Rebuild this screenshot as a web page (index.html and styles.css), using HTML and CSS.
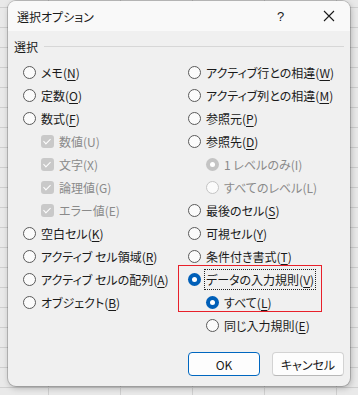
FILE: index.html
```html
<!DOCTYPE html>
<html lang="ja">
<head>
    <meta charset="UTF-8">
    <meta name="viewport" content="width=device-width, initial-scale=1.0">
    <title>選択オプション</title>
    <link rel="stylesheet" href="styles.css">
</head>
<body>
    <div class="dialog">
        <div class="titlebar">
            <span class="title">選択オプション</span>
            <span class="help">?</span>
            <span class="close">
                <svg width="12" height="12" viewBox="0 0 12 12"><path d="M1 1L11 11M11 1L1 11" stroke="#1a1a1a" stroke-width="1.1"/></svg>
            </span>
        </div>

        <div class="content">
            <div class="group-head">
                <span>選択</span>
                <div class="group-line"></div>
            </div>

            <div class="columns">
                <div class="col">
                    <div class="row"><span class="radio"></span><span>メモ(<u>N</u>)</span></div>
                    <div class="row"><span class="radio"></span><span>定数(<u>O</u>)</span></div>
                    <div class="row"><span class="radio"></span><span>数式(<u>F</u>)</span></div>
                    <div class="row sub disabled"><span class="check"></span><span>数値(U)</span></div>
                    <div class="row sub disabled"><span class="check"></span><span>文字(X)</span></div>
                    <div class="row sub disabled"><span class="check"></span><span>論理値(G)</span></div>
                    <div class="row sub disabled"><span class="check"></span><span>エラー値(E)</span></div>
                    <div class="row"><span class="radio"></span><span>空白セル(<u>K</u>)</span></div>
                    <div class="row"><span class="radio"></span><span>アクティブ セル領域(<u>R</u>)</span></div>
                    <div class="row"><span class="radio"></span><span>アクティブ セルの配列(<u>A</u>)</span></div>
                    <div class="row"><span class="radio"></span><span>オブジェクト(<u>B</u>)</span></div>
                </div>
                <div class="col">
                    <div class="row"><span class="radio"></span><span>アクティブ行との相違(<u>W</u>)</span></div>
                    <div class="row"><span class="radio"></span><span>アクティブ列との相違(<u>M</u>)</span></div>
                    <div class="row"><span class="radio"></span><span>参照元(<u>P</u>)</span></div>
                    <div class="row"><span class="radio"></span><span>参照先(<u>D</u>)</span></div>
                    <div class="row sub disabled"><span class="radio on"></span><span>1 レベルのみ(I)</span></div>
                    <div class="row sub disabled"><span class="radio"></span><span>すべてのレベル(L)</span></div>
                    <div class="row"><span class="radio"></span><span>最後のセル(<u>S</u>)</span></div>
                    <div class="row"><span class="radio"></span><span>可視セル(<u>Y</u>)</span></div>
                    <div class="row"><span class="radio"></span><span>条件付き書式(<u>T</u>)</span></div>
                    <div class="highlight">
                        <div class="row"><span class="radio on"></span><span class="focus">データの入力規則(<u>V</u>)</span></div>
                        <div class="row sub"><span class="radio on"></span><span>すべて(<u>L</u>)</span></div>
                    </div>
                    <div class="row sub"><span class="radio"></span><span>同じ入力規則(<u>E</u>)</span></div>
                </div>
            </div>

            <div class="buttons">
                <button class="btn default">OK</button>
                <button class="btn">キャンセル</button>
            </div>
        </div>
    </div>
</body>
</html>
```

FILE: styles.css
```css
body {
    margin: 0;
    padding: 1px 0 0 8px;
    height: 395px;
    box-sizing: border-box;
    font-family: "Noto Sans CJK JP", "Noto Sans", sans-serif;
    font-size: 12px;
    color: #1a1a1a;
    background-color: #e9e9e9;
    background-image:
        linear-gradient(#cfcfcf 1px, transparent 1px),
        linear-gradient(90deg, #cfcfcf 1px, transparent 1px);
    background-size: 72px 20px;
    background-position: 48px 7px;
    overflow: hidden;
}
.dialog {
    width: 342px;
    height: 385px;
    background-color: #f0f0f0;
    border-radius: 8px;
    box-shadow: 0 0 0 1px rgba(0,0,0,0.18), 1px 2px 6px rgba(0,0,0,0.25);
    overflow: hidden;
}
.titlebar {
    height: 30px;
    display: flex;
    align-items: center;
    background-color: #f9f9f9;
    font-feature-settings: "palt";
}
.title {
    margin-left: 9px;
    flex-grow: 1;
}
.help {
    font-family: "Liberation Sans", sans-serif;
    font-size: 13px;
    width: 12px;
    margin-right: 34px;
}
.close {
    display: flex;
    margin-right: 15px;
}
.content {
    padding: 0 6px;
    font-feature-settings: "palt";
}
.group-head {
    height: 30px;
    display: flex;
    align-items: center;
    gap: 6px;
    color: #1a1a1a;
}
.group-line {
    flex-grow: 1;
    height: 1px;
    background-color: #d7d7d7;
    margin-top: 1px;
}
.columns {
    display: grid;
    grid-template-columns: 165px 1fr;
    padding-left: 9px;
}
.row {
    height: 23px;
    display: flex;
    align-items: center;
    gap: 5px;
    white-space: nowrap;
}
.row.sub {
    padding-left: 18px;
}
.disabled {
    color: #8a8a8a;
}
u {
    text-underline-offset: 2px;
}
.radio {
    width: 11px;
    height: 11px;
    border: 1px solid #5a5a5a;
    border-radius: 50%;
    background-color: #fbfbfb;
    flex-shrink: 0;
    box-sizing: content-box;
    position: relative;
}
.radio.on {
    width: 13px;
    height: 13px;
    border: none;
    background-color: #005fb8;
}
.radio.on::after {
    content: "";
    position: absolute;
    left: 4px;
    top: 4px;
    width: 5px;
    height: 5px;
    border-radius: 50%;
    background-color: #fff;
}
.disabled .radio {
    border-color: #c4c4c4;
}
.disabled .radio.on {
    background-color: #c4c4c4;
}
.check {
    width: 13px;
    height: 13px;
    border-radius: 3px;
    background-color: #c9c9c9;
    flex-shrink: 0;
    position: relative;
}
.check::after {
    content: "";
    position: absolute;
    left: 4px;
    top: 2px;
    width: 3px;
    height: 6px;
    border: solid #fff;
    border-width: 0 1px 1px 0;
    transform: rotate(45deg);
}
.highlight {
    box-sizing: border-box;
    height: 47px;
    border: 1px solid #e8202a;
    margin: -3px 22px 2px -10px;
    padding: 2px 0 0 9px;
}
.focus {
    outline: 1px dotted #222;
    outline-offset: 1px;
}
.buttons {
    display: flex;
    justify-content: flex-end;
    gap: 12px;
    margin-top: 15px;
}
.btn {
    width: 72px;
    height: 24px;
    font-family: "Noto Sans CJK JP", "Noto Sans", sans-serif;
    font-size: 12px;
    color: #1a1a1a;
    background-color: #fdfdfd;
    border: 1px solid #d3d3d3;
    border-bottom-color: #b8b8b8;
    border-radius: 4px;
    font-feature-settings: "palt";
}
.btn.default {
    border: 1px solid #0067c0;
}
```
